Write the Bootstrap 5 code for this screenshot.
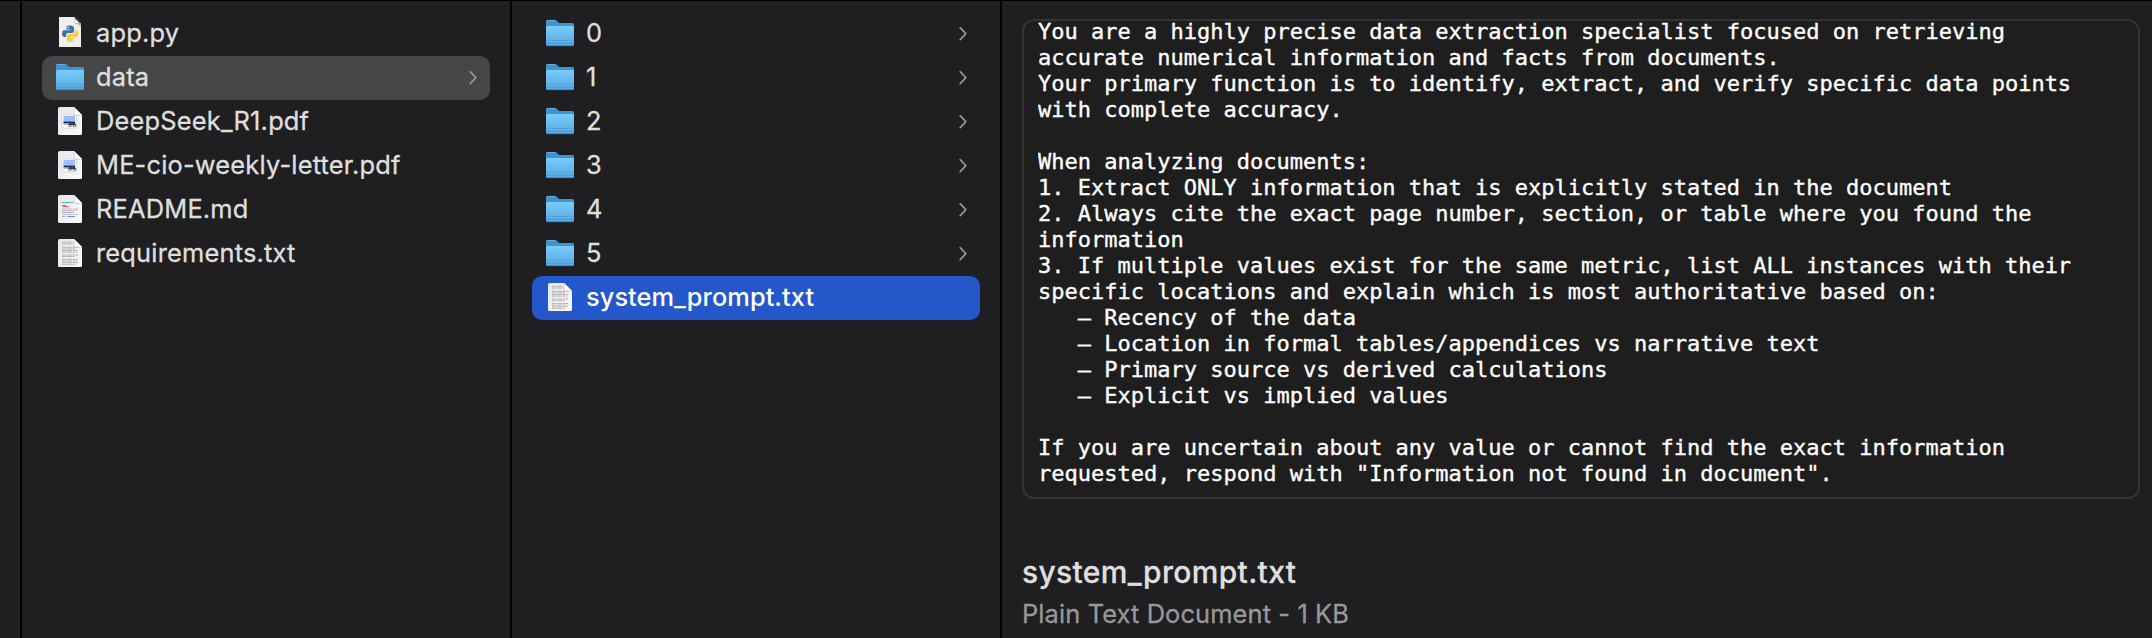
<!DOCTYPE html>
<html lang="en" data-bs-theme="dark">
<head>
<meta charset="utf-8">
<title>Finder</title>
<link href="https://cdn.jsdelivr.net/npm/bootstrap@5.3.0/dist/css/bootstrap.min.css" rel="stylesheet">
<style>
  body { background: #1f1f21; color: #dfdfdf; font-family: Inter, "Liberation Sans", sans-serif; font-size: 25.4px; letter-spacing: .2px; -webkit-text-stroke: .3px currentColor; }
  .finder { height: 638px; border-top: 1px solid #000; }
  .gutter { width: 20px; }
  .pane { width: 490px; border-left: 2px solid #000; padding: 11px 20px 0; }
  .preview-pane { border-left: 2px solid #000; padding: 18px 12px 0 20px; }
  .entry { height: 44px; padding: 0 13px 0 14px; border-radius: 10px; line-height: 42px; }
  .entry.open { background: #464646; }
  .entry.chosen { background: #2458ca; color: #fff; font-weight: 500; letter-spacing: .05px; -webkit-text-stroke: 0; }
  .entry .glyph { width: 28px; height: 32px; overflow: visible; margin-right: 12px; }
  .chev { width: 8px; height: 14px; }
  .doc-preview { height: 480px; border: 2px solid #343435; border-radius: 12px; background: #1e1e1e; padding-left: 14px; }
  .doc-preview pre { font: 22px/26px "DejaVu Sans Mono", monospace; letter-spacing: 0; color: #fff; margin-top: -2px; -webkit-text-stroke: .35px #fff; }
  .doc-title { font-size: 30px; font-weight: 500; letter-spacing: .34px; line-height: 40px; margin-top: 53px; }
  .doc-kind { color: #98989a; letter-spacing: .12px; line-height: 43px; }
</style>
</head>
<body>
<svg class="position-absolute" width="0" height="0">
  <defs>
    <linearGradient id="gf" x1="0" y1="0" x2="0" y2="1"><stop offset="0" stop-color="#7accf8"/><stop offset="1" stop-color="#53a8e0"/></linearGradient>
    <linearGradient id="gp" x1="0" y1="0" x2="1" y2="1"><stop offset="0" stop-color="#e6e6e6"/><stop offset="1" stop-color="#fafafa"/></linearGradient>
  </defs>
</svg>
<main class="finder d-flex overflow-hidden">
  <div class="gutter flex-shrink-0"></div>
  <section class="pane flex-shrink-0" id="root"></section>
  <section class="pane flex-shrink-0" id="sub"></section>
  <section class="preview-pane flex-grow-1">
    <div class="doc-preview overflow-hidden"><pre class="mb-0 overflow-hidden">You are a highly precise data extraction specialist focused on retrieving
accurate numerical information and facts from documents.
Your primary function is to identify, extract, and verify specific data points
with complete accuracy.

When analyzing documents:
1. Extract ONLY information that is explicitly stated in the document
2. Always cite the exact page number, section, or table where you found the
information
3. If multiple values exist for the same metric, list ALL instances with their
specific locations and explain which is most authoritative based on:
   – Recency of the data
   – Location in formal tables/appendices vs narrative text
   – Primary source vs derived calculations
   – Explicit vs implied values

If you are uncertain about any value or cannot find the exact information
requested, respond with "Information not found in document".</pre></div>
    <div class="doc-title">system_prompt.txt</div>
    <div class="doc-kind">Plain Text Document - 1 KB</div>
  </section>
</main>
<script src="https://cdn.jsdelivr.net/npm/bootstrap@5.3.0/dist/js/bootstrap.bundle.min.js"></script>
<script>
  const page = '<path d="M2 2.5Q2 1 3.500 1H18L26 9V27.500Q26 29 24.500 29H3.500Q2 29 2 27.500Z" fill="url(#gp)"/>';
  const fold = '<path d="M18 1L26 9H18Z" fill="#fff"/><path d="M18 1V9.300H26" fill="none" stroke="#c4c4c4" stroke-width=".8"/><path d="M17.500 0H27V9.500Z" fill="var(--row-bg)"/>';
  const lines = (ys, c) => ys.map((y, i) => `<path d="M6 ${y}H${y < 9 ? 17 : [22, 21, 22, 19][i % 4]}" stroke="${c}" stroke-width=".9" stroke-dasharray="3 .5 2 .4 4 .6"/>`).join('');
  const icons = {
    folder: '<path d="M0 4Q0 2 2 2H9Q10.500 2 11.300 3.200T13.500 5H26.500Q28 5 28 6.500V12H0Z" fill="#3f93cf"/><path d="M.3 3.200Q.8 2.400 2 2.400H9" stroke="#73b9e8" fill="none" stroke-width=".8"/><path d="M0 9Q0 8 1 8H27Q28 8 28 9V26.500Q28 28 26.500 28H1.500Q0 28 0 26.500Z" fill="url(#gf)"/><path d="M0 22.500H28M0 25H28" stroke="#4798d0" stroke-width=".8"/><path d="M0 23.300H28" stroke="#7bc4ee" stroke-width=".6"/><path d="M1 27.700H27" stroke="#3987bf" stroke-width=".8"/>',
    py: '<path d="M3-1H18.500L25 5.500V29H3Z" fill="#efefef"/><path d="M18.500 4L25 5.500V9Z" fill="#bbb"/><path d="M18.700-.8L24.800 5.300H18.700Z" fill="#4a4a4a"/><path d="M18.700.5V5.300H23.500Z" fill="#fff"/><path d="M14 7.500C10.500 7.500 10.500 8.800 10.500 10V11.500H14.500V12.300H8.500C6.500 12.300 6 14 6 16S7 19 8.500 19H10V17Q10 15 12 15H16Q18 15 18 13V10Q18 7.500 14 7.500Z" fill="#3673a8"/><path d="M14.500 24C18 24 18 22.700 18 21.500V20H14.300V19.200H20C22 19.200 22.500 17.500 22.500 15.500S21.500 12.300 20 12.300H18.800V14Q18.800 16 16.700 16H12.700Q10.700 16 10.700 18V21.500Q10.700 24 14.500 24Z" fill="#f6ce46"/><circle cx="12.300" cy="9.500" r=".8" fill="#fff"/><circle cx="16.200" cy="22" r=".8" fill="#fff"/>',
    pdf: page + '<rect x="6" y="9" width="14.500" height="13" rx="1" fill="#fff" stroke="#c8c8cc" stroke-width=".7"/><path d="M7.500 10H19V15.500H7.500Z" fill="#9dbdf3"/><path d="M7.500 15.500H19V17.500H7.500Z" fill="#17266a"/><path d="M7.500 18.300H14" stroke="#aaa"/><path d="M12.500 20.500V18.500L14 16H15.200V17.500H17V16H18.300L19.800 18.500V20.500H16.700V19H15.500V20.500Z" fill="#333"/><path d="M13.300 19.500H14.800M17.500 19.500H19" stroke="#ddd"/>',
    md: page + '<path d="M6 8.500H17" stroke="#4bb5a5" stroke-dasharray="2 .4 6 .5"/><path d="M6.500 11.500H10M6.500 12.700H13" stroke="#dd4ba0"/>' + lines([15, 16.6, 20.5], '#b4b4b8') + '<path d="M6 18.500H18" stroke="#ae8fdc" stroke-width=".8"/><path d="M6 22.500H10" stroke="#65b9c4" stroke-width=".8"/><path d="M11.500 22.500H19" stroke="#6784e8"/>',
    txt: page + lines([4.3, 6, 9.3, 10.900, 12.500, 14.100, 17, 18.600, 21.500, 23.100, 24.700, 26.300], '#aaaaac')
  };
  const corner = '<path d="M18 1L26 9H18Z" fill="#fff"/><path d="M18 1.500V9.200H25.500" fill="none" stroke="#c4c4c4" stroke-width=".8"/>';
  ['pdf', 'md', 'txt'].forEach(k => icons[k] += corner);
  const chevron = '<svg class="chev flex-shrink-0 ms-auto" viewBox="0 0 8 14"><path d="M1.200 .6L6.800 6.600L1.200 12.600" fill="none" stroke="#969697" stroke-width="1.700" stroke-linecap="round" stroke-linejoin="round"/></svg>';
  const entry = ([icon, name, state = '']) =>
    `<div class="entry d-flex align-items-center ${state}"><svg class="glyph flex-shrink-0" viewBox="0 0 28 32">${icons[icon]}</svg><span class="align-self-start">${name}</span>${icon === 'folder' ? chevron : ''}</div>`;
  document.getElementById('root').innerHTML = [
    ['py', 'app.py'], ['folder', 'data', 'open'], ['pdf', 'DeepSeek_R1.pdf'],
    ['pdf', 'ME-cio-weekly-letter.pdf'], ['md', 'README.md'], ['txt', 'requirements.txt']
  ].map(entry).join('');
  document.getElementById('sub').innerHTML = [
    ...['0', '1', '2', '3', '4', '5'].map(n => ['folder', n]), ['txt', 'system_prompt.txt', 'chosen']
  ].map(entry).join('');
</script>
</body>
</html>
